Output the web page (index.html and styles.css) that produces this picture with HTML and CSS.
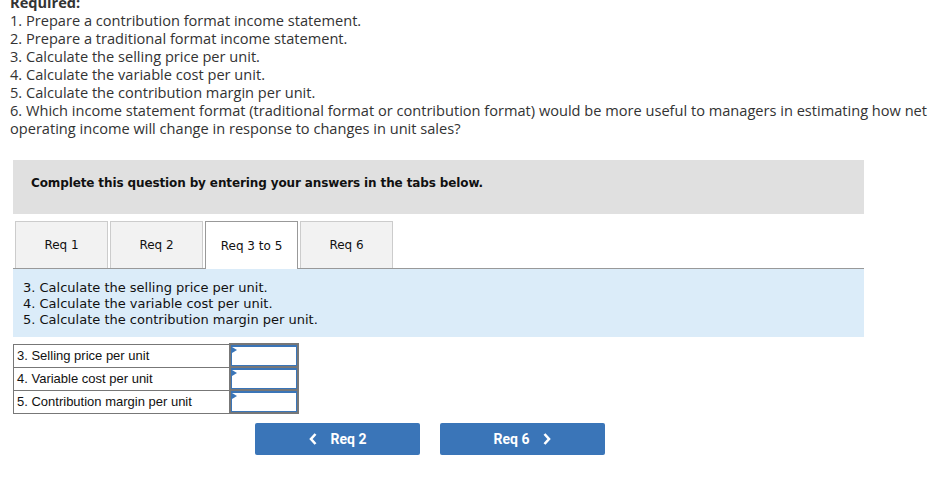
FILE: index.html
```html
<!DOCTYPE html>
<html>
<head>
<meta charset="utf-8">
<link rel="stylesheet" href="styles.css">
</head>
<body>
<div class="intro">
  <div class="req-title">Required:</div>
  <div>1. Prepare a contribution format income statement.</div>
  <div>2. Prepare a traditional format income statement.</div>
  <div>3. Calculate the selling price per unit.</div>
  <div>4. Calculate the variable cost per unit.</div>
  <div>5. Calculate the contribution margin per unit.</div>
  <div>6. Which income statement format (traditional format or contribution format) would be more useful to managers in estimating how net operating income will change in response to changes in unit sales?</div>
</div>

<div class="question">
  <div class="banner">Complete this question by entering your answers in the tabs below.</div>
  <div class="tabs">
    <div class="tab">Req 1</div>
    <div class="tab">Req 2</div>
    <div class="tab active">Req 3 to 5</div>
    <div class="tab">Req 6</div>
  </div>
  <div class="panel">
    <div>3. Calculate the selling price per unit.</div>
    <div>4. Calculate the variable cost per unit.</div>
    <div>5. Calculate the contribution margin per unit.</div>
  </div>
  <table class="answers">
    <tr><td class="label">3. Selling price per unit</td><td class="inp"><div class="box"></div></td></tr>
    <tr><td class="label">4. Variable cost per unit</td><td class="inp"><div class="box"></div></td></tr>
    <tr><td class="label">5. Contribution margin per unit</td><td class="inp"><div class="box"></div></td></tr>
  </table>
  <div class="nav">
    <button class="btn"><svg class="chev" width="8" height="12" viewBox="0 0 8 12"><polyline points="6.5,1 2,6 6.5,11" fill="none" stroke="#fff" stroke-width="2.6"/></svg>Req 2</button>
    <button class="btn">Req 6<svg class="chev right" width="8" height="12" viewBox="0 0 8 12"><polyline points="1.5,1 6,6 1.5,11" fill="none" stroke="#fff" stroke-width="2.6"/></svg></button>
  </div>
</div>
</body>
</html>
```

FILE: styles.css
```css
html, body {
  margin: 0;
  padding: 0;
  background: #fff;
}
body {
  overflow: hidden;
}
.intro {
  margin-top: -7px;
  padding-left: 10px;
  padding-right: 8px;
  font-family: "Open Sans", "Liberation Sans", sans-serif;
  font-size: 14.6px;
  line-height: 18px;
  color: #333;
}
.req-title {
  font-weight: bold;
}
.question {
  margin: 23px 0 0 13px;
  width: 851px;
}
.banner {
  background: #e0e0e0;
  height: 54px;
  display: flex;
  align-items: center;
  padding-left: 18px;
  padding-bottom: 8px;
  box-sizing: border-box;
  font-family: "DejaVu Sans", Verdana, sans-serif;
  font-weight: bold;
  font-size: 12px;
  letter-spacing: -0.12px;
  color: #111;
}
.tabs {
  display: flex;
  gap: 2px;
  margin-top: 7px;
  padding-left: 2px;
  border-bottom: 1px solid #999;
  height: 47px;
}
.tab {
  width: 93px;
  box-sizing: border-box;
  height: 47px;
  background: #f2f2f2;
  border: 1px solid #ccc;
  border-bottom: none;
  display: flex;
  align-items: center;
  justify-content: center;
  font-family: "DejaVu Sans", Verdana, sans-serif;
  font-size: 12px;
  color: #111;
}
.tab.active {
  border-color: #999;
  height: 48px;
  background: linear-gradient(#fff 47px, #dbecf9 47px);
}
.panel {
  background: #dbecf9;
  height: 68px;
  box-sizing: border-box;
  padding: 11px 0 0 10px;
  font-family: "DejaVu Sans", Verdana, sans-serif;
  font-size: 13px;
  line-height: 16px;
  color: #111;
}
.answers {
  margin-top: 6px;
  border-collapse: collapse;
  font-family: "Liberation Sans", Arial, sans-serif;
  font-size: 13px;
  color: #111;
}
.answers td {
  border: 1px solid #777;
  height: 21px;
  padding: 0;
}
.answers .label {
  width: 212px;
  padding-left: 3px;
}
.answers .inp {
  width: 66px;
  border: 2px solid #777;
  padding: 0;
  position: relative;
}
.box {
  box-sizing: border-box;
  height: 21px;
  border: 1px solid #3a75b8;
  border-width: 2px 1px 1px 1px;
}
.inp::before {
  content: "";
  position: absolute;
  left: 1px;
  top: 2px;
  border-left: 5px solid #3a75b8;
  border-top: 3px solid transparent;
  border-bottom: 3px solid transparent;
}
.nav {
  display: flex;
  gap: 20px;
  margin: 9px 0 0 242px;
}
.btn {
  width: 165px;
  height: 32px;
  background: #3a75b8;
  border: none;
  border-radius: 2px;
  color: #fff;
  font-family: Roboto, "Liberation Sans", sans-serif;
  font-weight: bold;
  font-size: 14px;
  display: flex;
  align-items: center;
  justify-content: center;
  padding: 0;
}
.chev {
  margin-right: 14px;
}
.chev.right {
  margin-right: 0;
  margin-left: 14px;
}
```
